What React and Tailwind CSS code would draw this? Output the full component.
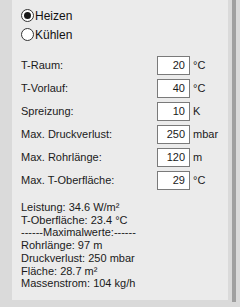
import React from 'react';

const rows = [
  { label: 'T-Raum:', value: '20', unit: '°C' },
  { label: 'T-Vorlauf:', value: '40', unit: '°C' },
  { label: 'Spreizung:', value: '10', unit: 'K' },
  { label: 'Max. Druckverlust:', value: '250', unit: 'mbar' },
  { label: 'Max. Rohrlänge:', value: '120', unit: 'm' },
  { label: 'Max. T-Oberfläche:', value: '29', unit: '°C' },
];

const results = [
  'Leistung: 34.6 W/m²',
  'T-Oberfläche: 23.4 °C',
  '------Maximalwerte:------',
  'Rohrlänge: 97 m',
  'Druckverlust: 250 mbar',
  'Fläche: 28.7 m²',
  'Massenstrom: 104 kg/h',
];

function Radio({ checked, label }) {
  return (
    <div className="flex items-center h-[19px]">
      <div className="w-[13px] h-[13px] rounded-full border border-[#333333] bg-white flex items-center justify-center">
        {checked && <div className="w-[7px] h-[7px] rounded-full bg-[#1a1a1a]" />}
      </div>
      <span className="ml-[1px] text-[12px] text-[#111111]">{label}</span>
    </div>
  );
}

export default function App() {
  return (
    <div
      className="w-[240px] h-[307px] bg-[#dadada] flex overflow-hidden"
      style={{ fontFamily: '"Liberation Sans", Arial, sans-serif' }}
    >
      <div className="w-[12px] shrink-0" />
      <div className="w-[216px] h-[300px] bg-[#ebebeb] shrink-0 pl-[9px] pt-[6px]">
        <Radio checked label="Heizen" />
        <Radio label="Kühlen" />

        <div className="mt-[12px] flex flex-col gap-[4px]">
          {rows.map((r) => (
            <div key={r.label} className="flex items-center h-[19px] text-[11px] text-[#1a1a1a]">
              <span className="w-[136px]">{r.label}</span>
              <div className="w-[33px] h-[19px] bg-white border border-[#7a7a7a] flex items-center justify-end pr-[4px]">
                {r.value}
              </div>
              <span className="ml-[3px]">{r.unit}</span>
            </div>
          ))}
        </div>

        <div className="mt-[11px] flex flex-col text-[11px] leading-[12.7px] text-[#1a1a1a]">
          {results.map((t) => (
            <span key={t}>{t}</span>
          ))}
        </div>
      </div>
      <div className="w-[4px] shrink-0" />
      <div className="w-[4px] h-[302px] bg-[#a0a0a0] shrink-0" />
    </div>
  );
}
